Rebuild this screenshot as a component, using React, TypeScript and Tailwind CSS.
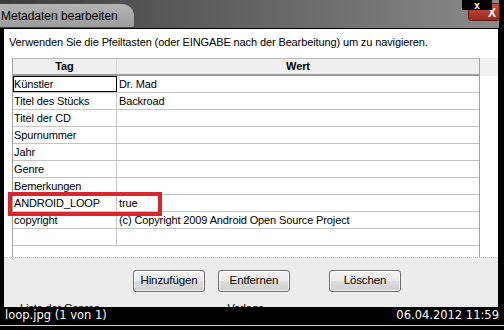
const rows: [string, string][] = [
  ['Künstler', 'Dr. Mad'],
  ['Titel des Stücks', 'Backroad'],
  ['Titel der CD', ''],
  ['Spurnummer', ''],
  ['Jahr', ''],
  ['Genre', ''],
  ['Bemerkungen', ''],
  ['ANDROID_LOOP', 'true'],
  ['copyright', '(c) Copyright 2009 Android Open Source Project'],
  ['', ''],
];

function WinButton({ label }: { label: string }) {
  return (
    <button
      type="button"
      className="flex h-[22px] w-[72px] items-center justify-center rounded-[3px] border border-[#707070] bg-[linear-gradient(180deg,#f4f4f4_0%,#ebebeb_48%,#dddddd_52%,#cfcfcf_100%)] text-[11.5px] text-black shadow-[inset_0_0_0_1px_rgba(255,255,255,0.7)]"
    >
      {label}
    </button>
  );
}

export default function App() {
  return (
    <div className="relative h-[330px] w-[504px] overflow-hidden bg-black font-['Liberation_Sans',Arial,sans-serif] text-[11px] tracking-[-0.12px] text-black">
      {/* title bar */}
      <div className="flex h-[29px] w-[499px] items-end border-b border-black bg-[linear-gradient(90deg,#3c3c3c_0%,#555555_30%,#6e6e6e_65%,#8a8a8a_100%)]">
        <div className="mb-[1px] flex h-[23px] w-[134px] items-center rounded-tr-[12px] rounded-br-[2px] bg-[linear-gradient(180deg,#b4b4b4,#9c9c9c)] pl-[1px] text-[12px] tracking-normal text-black">
          Metadaten bearbeiten
        </div>
      </div>

      {/* close button */}
      <div className="absolute left-[468px] top-[3px] flex h-[18px] w-[32px] items-end justify-end rounded-[3px] border border-[#5a1a10] bg-[linear-gradient(180deg,#c8503c,#9a2a1c)] pb-[1px] pr-[3px] text-[12px] font-bold leading-none text-white">
        X
      </div>
      <div className="absolute left-[462px] top-0 flex h-[10px] w-[30px] items-end justify-center bg-black text-[10px] font-bold leading-[8px] text-white">
        x
      </div>

      {/* window body */}
      <div className="ml-[4px] w-[494px]">
        <div className="h-[228px] bg-white pt-[7px]">
          <p className="pl-[5px] leading-[13px]">
            Verwenden Sie die Pfeiltasten (oder EINGABE nach der Bearbeitung) um zu navigieren.
          </p>
          <div className="mt-[9px] flex h-[199px]">
            <div className="ml-[8px] flex w-[468px] flex-col border-x border-[#a0a0a0]">
              <div className="flex h-[18px] border-t border-b-2 border-t-[#b8b8b8] border-b-[#9a9a9a] bg-[#efefef] font-bold leading-[15px]">
                <div className="w-[104px] border-r border-[#d8d8d8] text-center">Tag</div>
                <div className="flex-1 text-center">Wert</div>
              </div>
              {rows.map(([tag, value], i) => (
                <div key={i} className="flex h-[17px] border-b border-[#c4c4c4] leading-[16px]">
                  <div
                    className={`w-[104px] border-r border-[#c4c4c4] pl-[1px] ${
                      i === 0 ? 'outline outline-1 -outline-offset-1 outline-black' : ''
                    }`}
                  >
                    {tag}
                  </div>
                  <div className="flex-1 pl-[2px]">{value}</div>
                </div>
              ))}
            </div>
            <div className="h-[18px] flex-1 bg-[#f0f0f0]" />
          </div>
        </div>

        <div className="relative h-[50px] overflow-hidden border-t border-dotted border-[#c8c8c8] bg-[#ececec]">
          <div className="mt-[12px] flex gap-[13px] pl-[129px]">
            <WinButton label="Hinzufügen" />
            <WinButton label="Entfernen" />
            <div className="w-[13px]" />
            <WinButton label="Löschen" />
          </div>
          <div className="mt-[10px] flex text-[11px] leading-[13px]">
            <span className="pl-[16px]">Liste der Genres</span>
            <span className="pl-[128px]">Vorlage</span>
          </div>
        </div>
      </div>

      {/* viewer status bar */}
      <div className="flex h-[19px] items-center justify-between border-b border-[#d0d0d0] bg-black pl-[5px] pr-[5px] font-['DejaVu_Sans',sans-serif] text-[11.5px] tracking-normal text-white">
        <span>loop.jpg (1 von 1)</span>
        <span>06.04.2012 11:59</span>
      </div>

      {/* highlight */}
      <div className="absolute left-[8px] top-[192px] h-[24px] w-[154px] border-4 border-[#d8262c]" />
    </div>
  );
}
